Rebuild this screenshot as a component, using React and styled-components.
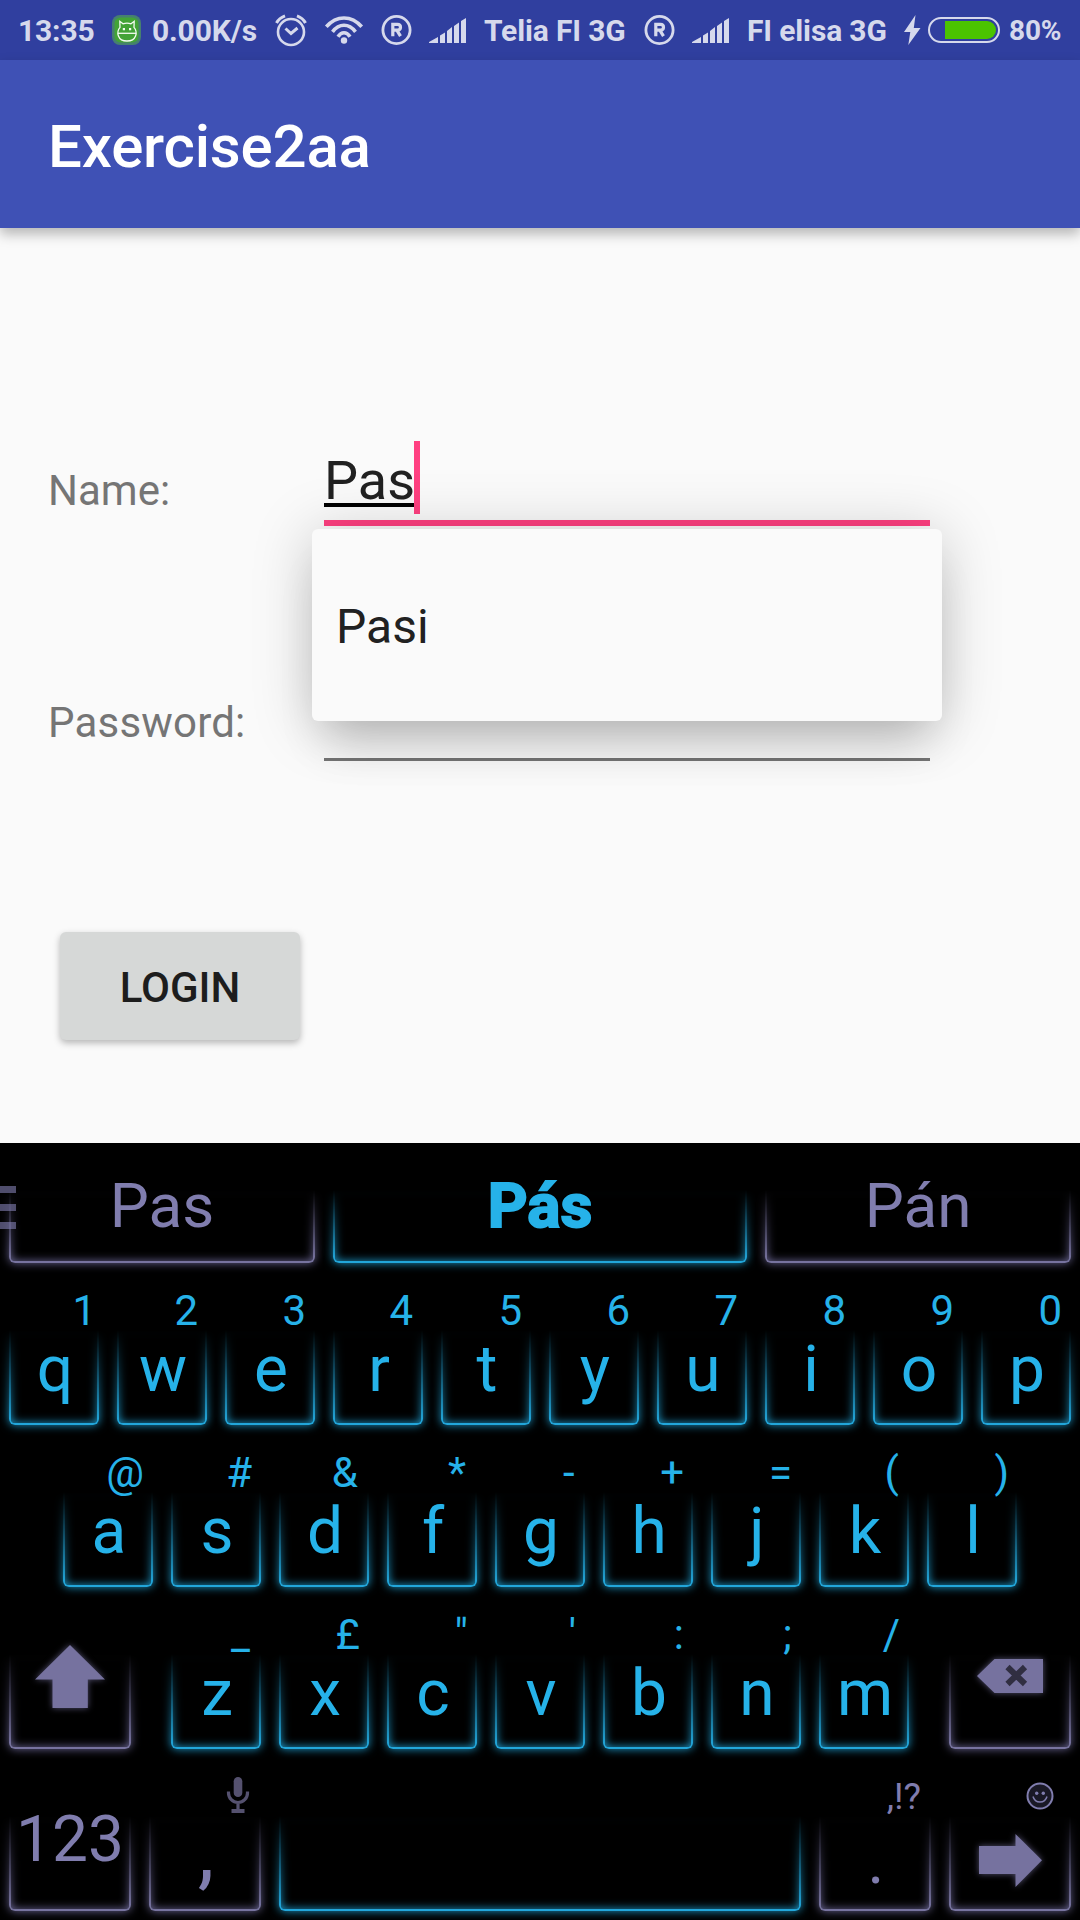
import React from "react";
import styled, { createGlobalStyle, css } from "styled-components";

const BLUE = "#26b2e9";
const PURPLE = "#807dae";
const ICON_PURPLE = "#76729f";
const STATUS = "#d6d9ec";

const GlobalStyle = createGlobalStyle`
  *, *::before, *::after { box-sizing: border-box; }
  body { margin: 0; background: #fafafa; font-family: Roboto, "Noto Sans", sans-serif; }
  svg { display: block; flex: none; overflow: visible; }
`;

const Screen = styled.div`
  display: flex;
  flex-direction: column;
  width: 1080px;
  height: 1920px;
  overflow: hidden;
`;

/* ---------- status bar ---------- */

const StatusBar = styled.header`
  display: grid;
  grid-template-columns: 94px 40px 123px 50px 56px 48px 55px 160px 48px 55px 157px 24px 81px auto;
  align-items: center;
  height: 60px;
  padding-left: 18px;
  background: #303f9f;
  color: ${STATUS};
`;

const StatusText = styled.span`
  padding-top: 1px;
  font-size: ${(p) => p.$size || 30}px;
  font-weight: 700;
  letter-spacing: -0.15px;
  line-height: 36px;
  white-space: nowrap;
`;

const Battery = styled.div`
  display: flex;
  justify-content: flex-end;
  width: 72px;
  height: 26px;
  padding: 2px;
  border: 2px solid ${STATUS};
  border-radius: 13px;
`;

const BatteryLevel = styled.div`
  width: 51px;
  height: 18px;
  border-radius: 0 9px 9px 0;
  background: #4bc400;
`;

/* ---------- app ---------- */

const AppBar = styled.div`
  display: flex;
  flex: none;
  align-items: center;
  height: 168px;
  padding: 5px 48px 0;
  background: #3f51b5;
  box-shadow: 0 6px 12px rgba(0, 0, 0, 0.28);
  z-index: 1;
`;

const Title = styled.h1`
  margin: 0;
  color: #fff;
  font-size: 60px;
  font-weight: 500;
  letter-spacing: -0.18px;
  line-height: 70px;
`;

const Form = styled.main`
  display: flex;
  flex: none;
  flex-direction: column;
  height: 915px;
  padding: 213px 48px 0;
  background: #fafafa;
`;

const FormRow = styled.div`
  display: grid;
  grid-template-columns: 276px 606px;
  height: ${(p) => p.$height}px;
  margin-bottom: 171px;
`;

const Label = styled.label`
  padding-top: ${(p) => p.$drop || 0}px;
  color: #757575;
  font-size: 42px;
  letter-spacing: ${(p) => p.$tracking || 0}px;
  line-height: 50px;
`;

const Field = styled.div`
  position: relative;
  display: flex;
  border-bottom: ${(p) => (p.$focused ? "6px solid #ff4081" : "3px solid #757575")};
`;

const Typed = styled.span`
  height: 66px;
  border-bottom: 4px solid #000;
  color: #212121;
  font-size: 54px;
  line-height: 79px;
`;

const Caret = styled.span`
  width: 6px;
  height: 73px;
  margin-left: -1px;
  background: #ff4081;
`;

const Popup = styled.div`
  position: absolute;
  top: 88px;
  left: -12px;
  z-index: 2;
  display: flex;
  align-items: center;
  width: 630px;
  height: 192px;
  padding: 2px 24px 0;
  border-radius: 6px;
  background: #fafafa;
  color: #212121;
  font-size: 48px;
  box-shadow: 0 5px 60px rgba(0, 0, 0, 0.21), 0 34px 44px -14px rgba(0, 0, 0, 0.16);
`;

const LoginButton = styled.button`
  width: 240px;
  height: 108px;
  margin-left: 12px;
  padding: 3px 0 0;
  border: 0;
  border-radius: 6px;
  background: #d6d8d7;
  color: #1d1d1d;
  font: 500 42px/50px Roboto, sans-serif;
  box-shadow: 0 3px 7px rgba(0, 0, 0, 0.28);
`;

/* ---------- keyboard ---------- */

const Keyboard = styled.section`
  display: flex;
  flex: none;
  flex-direction: column;
  height: 777px;
  background: #000;
  overflow: hidden;
`;

const SuggestionRow = styled.div`
  position: relative;
  display: grid;
  grid-template-columns: 324px 432px 324px;
  height: 129px;
`;

const MenuHandle = styled.div`
  position: absolute;
  top: 43px;
  left: 0;
  display: grid;
  gap: 11px;
  width: 16px;
`;

const MenuBar = styled.i`
  height: 7px;
  background: rgba(128, 125, 174, 0.62);
`;

const KeyRow = styled.div`
  display: flex;
  justify-content: ${(p) => (p.$spread ? "space-between" : "center")};
  height: 162px;
`;

const KeyGroup = styled.div`
  display: flex;
`;

const Cell = styled.div`
  display: flex;
  flex-direction: column;
  width: ${(p) => p.$width || 108}px;
  padding: ${(p) => (p.$suggestion ? 47 : 0)}px 9px 9px;
  color: ${(p) => (p.$muted ? PURPLE : BLUE)};
`;

const Hint = styled.div`
  display: flex;
  justify-content: flex-end;
  height: 58px;
  padding-right: ${(p) => p.$inset || 9}px;
  font-size: ${(p) => p.$size || 42}px;
  line-height: 77px;
  white-space: nowrap;
`;

const KeyBox = styled.div`
  position: relative;
  display: flex;
  flex: 1;
  justify-content: center;
  align-items: flex-start;
`;

const KeyText = styled.span`
  position: relative;
  padding-left: ${(p) => p.$shift || 0}px;
  font-size: ${(p) => p.$size || 64}px;
  line-height: ${(p) => p.$line || 80}px;
  ${(p) =>
    p.$strong &&
    css`
      font-weight: 700;
      -webkit-text-stroke: 2px currentColor;
    `}
`;

/* The outline fades out upwards, together with its glow. */
const GlowMask = styled.div`
  position: absolute;
  inset: -12px;
  padding: 12px;
  mask-image: linear-gradient(to bottom, transparent 12px, #000 calc(100% - 16px));
`;

const GlowLine = styled.div`
  height: 100%;
  border: 2px solid ${(p) => (p.$muted ? "#77739f" : "#22a6da")};
  border-top: 0;
  border-radius: 0 0 6px 6px;
  box-shadow: 0 0 10px ${(p) => (p.$muted ? "#6a6594" : "#1d98c9")},
    inset 0 0 10px ${(p) => (p.$muted ? "#6a6594" : "#1d98c9")};
`;

const KeyIcon = styled.svg`
  position: relative;
  margin-top: ${(p) => p.$top}px;
  filter: drop-shadow(0 0 3px rgba(118, 114, 159, 0.7));
`;

const HintIcon = styled.svg`
  margin-top: ${(p) => p.$top}px;
  margin-right: ${(p) => p.$right}px;
`;

/* Distance from the key's right edge, for glyphs whose side bearing is unusual. */
const HINT_INSET = { 1: 3, 4: 10, "&": 11, "*": 11, "-": 10.5, "(": 10, ")": 8, _: 11, ",!?": 10 };

function Outline({ muted, children }) {
  return (
    <KeyBox>
      <GlowMask>
        <GlowLine $muted={muted} />
      </GlowMask>
      {children}
    </KeyBox>
  );
}

function Key({ label, hint, width, muted, size, line, shift = 2, hintSize, children }) {
  return (
    <Cell $width={width} $muted={muted}>
      <Hint $size={hintSize} $inset={HINT_INSET[hint]}>
        {hint}
      </Hint>
      <Outline muted={muted}>
        {label && (
          <KeyText $size={size} $line={line} $shift={shift}>
            {label}
          </KeyText>
        )}
        {children}
      </Outline>
    </Cell>
  );
}

function Suggestion({ text, strong }) {
  return (
    <Cell $suggestion $width={strong ? 432 : 324} $muted={!strong}>
      <Outline muted={!strong}>
        <KeyText $size={62} $line={32} $strong={strong}>
          {text}
        </KeyText>
      </Outline>
    </Cell>
  );
}

const TOP_KEYS = [["q", "1"], ["w", "2"], ["e", "3"], ["r", "4"], ["t", "5"], ["y", "6"], ["u", "7"], ["i", "8"], ["o", "9"], ["p", "0"]];
const HOME_KEYS = [["a", "@"], ["s", "#"], ["d", "&"], ["f", "*"], ["g", "-"], ["h", "+"], ["j", "="], ["k", "("], ["l", ")"]];
const BOTTOM_KEYS = [["z", "_"], ["x", "£"], ["c", '"'], ["v", "'"], ["b", ":"], ["n", ";"], ["m", "/"]];

const letters = (keys) => keys.map(([label, hint]) => <Key key={label} label={label} hint={hint} />);

/* ---------- drawings ---------- */

const SpeedIcon = () => (
  <svg width="29" height="30" viewBox="0 0 29 30">
    <rect width="29" height="30" rx="8" fill="#46806f" />
    <rect x="2.500" y="2.500" width="24" height="25" rx="6" fill="#42a336" />
    <g fill="none" stroke="#f4fbf2" strokeWidth="1.300">
      <path d="M8 12.300 7.800 6.300 11 8.800Q15 7.500 19 8.800L22.200 6.300 22 12.300C26 17 24.500 26 15 26S4 17 8 12.300z" />
      <path d="M5.800 18.300h18.400" />
    </g>
    <path d="M10.800 13h2.200v2.200h-2.200zM17 13h2.200v2.200H17z" fill="#f4fbf2" />
  </svg>
);

const AlarmIcon = () => (
  <svg width="32" height="32" viewBox="0 0 32 32" fill="none" stroke={STATUS} strokeWidth="2.600">
    <circle cx="16" cy="18" r="13" />
    <path d="M10.500 14.500 16 19.500l6.500-5.500" strokeWidth="3" />
    <path d="M1.500 9Q4 4 10 1.800M30.500 9Q28 4 22 1.800" strokeWidth="3" />
  </svg>
);

const WifiIcon = () => (
  <svg width="38" height="28" viewBox="0 0 38 28" fill="none" stroke={STATUS} strokeWidth="3.600">
    <path d="M1.300 10.800Q9 2 19 2t17.700 8.800M7.500 15.800Q12.500 9.300 19 9.300t11.500 6.500M13 20.800Q15.500 16.800 19 16.800t6 4" />
    <circle cx="19" cy="24.500" r="3.200" fill={STATUS} stroke="none" />
  </svg>
);

const RoamingIcon = () => (
  <svg width="31" height="30" viewBox="0 0 31 30" fill="none" stroke={STATUS}>
    <circle cx="15.500" cy="15" r="13.600" strokeWidth="2.800" />
    <path d="M11.800 21.200V9.300h4.700q3 0 3 2.900t-3 2.900h-4.700M15.800 15.200l3.700 6" strokeWidth="3.200" />
  </svg>
);

const SignalIcon = () => (
  <svg width="38" height="25" viewBox="0 0 38 25" fill={STATUS}>
    <path d="M0 25v-1L9 19v6zM11 17.500l5-3V25h-5zM18 13l5-4v16h-5zM25 8l5-3.500V25h-5zM32 3l5-3v25h-5z" />
  </svg>
);

const BoltIcon = () => (
  <svg width="17" height="30" viewBox="0 0 17 30" fill={STATUS}>
    <path d="M11.500 0 0 17h6.300L4.300 30 16.500 13H9.800z" />
  </svg>
);

const MicIcon = () => (
  <HintIcon $top={19} $right={3} width="22" height="36" viewBox="0 0 22 36">
    <rect x="6.700" y="0" width="8.600" height="20" rx="4.300" fill="#55516f" />
    <path d="M1.500 14.500v1.500a9.500 9.500 0 0 0 19 0v-1.500M11 26v6" fill="none" stroke="#55516f" strokeWidth="3.200" />
    <path d="M4.500 32h13v4h-13z" fill="#55516f" />
  </HintIcon>
);

const SmileIcon = () => (
  <HintIcon $top={25} $right={9} width="26" height="26" viewBox="0 0 26 26">
    <circle cx="13" cy="13" r="12.500" fill="#1a1926" stroke={PURPLE} strokeWidth="2" />
    <path d="M6 13.500q1.500 5.500 7 5.500t7-5.500" fill="none" stroke={PURPLE} strokeWidth="1.500" />
    <circle cx="9.700" cy="10.300" r="1.700" fill={PURPLE} />
    <circle cx="16.300" cy="10.300" r="1.700" fill={PURPLE} />
  </HintIcon>
);

const ShiftIcon = () => (
  <KeyIcon $top={-9} width="70" height="63" viewBox="0 0 70 63">
    <path d="M35 0 70 34.500H52.800V63H17.500V34.500H0z" fill={ICON_PURPLE} />
  </KeyIcon>
);

const BackspaceIcon = () => (
  <KeyIcon $top={5} width="66" height="34" viewBox="0 0 66 34">
    <path d="M0 17 17.500 0H66v34H17.500z" fill={ICON_PURPLE} />
    <path d="m30.500 8 17.500 17M48 8 30.500 25" stroke="#302e41" strokeWidth="6" />
  </KeyIcon>
);

const NextIcon = () => (
  <KeyIcon $top={18} width="63" height="53" viewBox="0 0 63 53">
    <path d="M0 12h36.500V0L63 26.300 36.500 53V40H0z" fill={ICON_PURPLE} />
  </KeyIcon>
);

export default function App() {
  return (
    <>
      <GlobalStyle />
      <Screen>
        <StatusBar>
          <StatusText>13:35</StatusText>
          <SpeedIcon />
          <StatusText>0.00K/s</StatusText>
          <AlarmIcon />
          <WifiIcon />
          <RoamingIcon />
          <SignalIcon />
          <StatusText>Telia FI 3G</StatusText>
          <RoamingIcon />
          <SignalIcon />
          <StatusText>FI elisa 3G</StatusText>
          <BoltIcon />
          <Battery>
            <BatteryLevel />
          </Battery>
          <StatusText $size={28}>80%</StatusText>
        </StatusBar>

        <AppBar>
          <Title>Exercise2aa</Title>
        </AppBar>

        <Form>
          <FormRow $height={85}>
            <Label $drop={25}>Name:</Label>
            <Field $focused>
              <Typed>Pas</Typed>
              <Caret />
              <Popup>Pasi</Popup>
            </Field>
          </FormRow>
          <FormRow $height={64}>
            <Label $drop={1} $tracking={0.2}>
              Password:
            </Label>
            <Field />
          </FormRow>
          <LoginButton>LOGIN</LoginButton>
        </Form>

        <Keyboard>
          <SuggestionRow>
            <Suggestion text="Pas" />
            <Suggestion text="Pás" strong />
            <Suggestion text="Pán" />
            <MenuHandle>
              <MenuBar />
              <MenuBar />
              <MenuBar />
            </MenuHandle>
          </SuggestionRow>
          <KeyRow>{letters(TOP_KEYS)}</KeyRow>
          <KeyRow>{letters(HOME_KEYS)}</KeyRow>
          <KeyRow $spread>
            <Key width={140} muted>
              <ShiftIcon />
            </Key>
            <KeyGroup>{letters(BOTTOM_KEYS)}</KeyGroup>
            <Key width={140} muted>
              <BackspaceIcon />
            </Key>
          </KeyRow>
          <KeyRow>
            <Key width={140} muted label="123" line={48} shift={0} />
            <Key width={130} muted label="," size={84} line={69} hint={<MicIcon />} />
            <Key width={540} />
            <Key width={130} muted label="." line={92} hint=",!?" hintSize={37} />
            <Key width={140} muted hint={<SmileIcon />}>
              <NextIcon />
            </Key>
          </KeyRow>
        </Keyboard>
      </Screen>
    </>
  );
}
